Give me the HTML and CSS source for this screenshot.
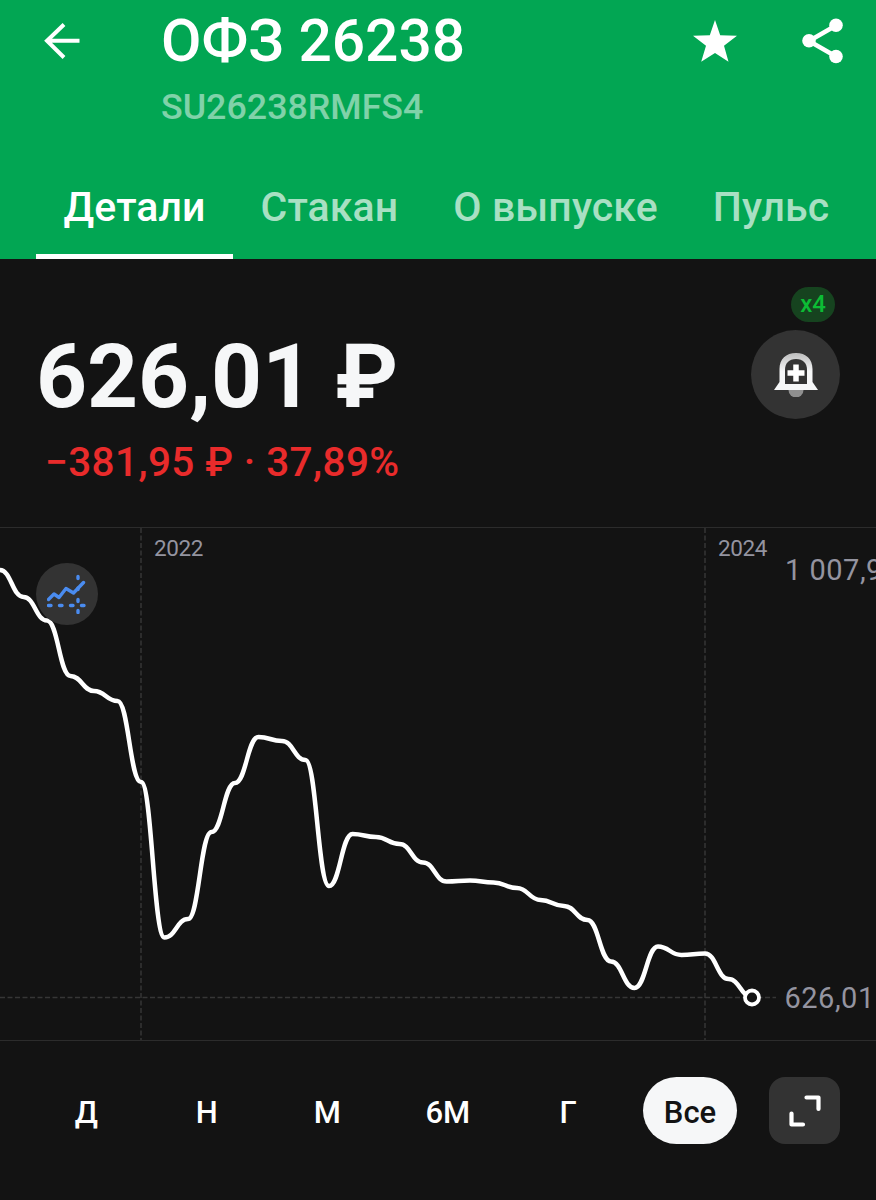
FILE: index.html
```
<!DOCTYPE html>
<html lang="ru">
<head>
    <meta charset="UTF-8">
    <meta name="viewport" content="width=device-width, initial-scale=1.0">
    <title>ОФЗ 26238</title>
    <link rel="stylesheet" href="styles.css">
</head>
<body>

<header class="header">
    <div class="topbar">
        <svg class="back" width="36" height="36" viewBox="0 0 36 36">
            <path d="M35.500 17.800H3M20 1.500L3 17.800L20 34.500" fill="none" stroke="#fff" stroke-width="4"/>
        </svg>
        <div class="heading">
            <h1>ОФЗ 26238</h1>
            <p>SU26238RMFS4</p>
        </div>
        <svg class="star" width="44" height="42" viewBox="0 0 44 42">
            <path d="M22 0L27.200 15.200L44 15.700L31 25.800L35.500 41.700L22 33L8.200 41.700L13 25.800L0 15.700L16.800 15.200Z" fill="#fff"/>
        </svg>
        <svg class="share" width="42" height="46" viewBox="0 0 42 46">
            <path d="M34 7.500L7 23L34 38.500" fill="none" stroke="#fff" stroke-width="4.500"/>
            <circle cx="34" cy="7.200" r="6.800" fill="#fff"/>
            <circle cx="7" cy="22.800" r="6.800" fill="#fff"/>
            <circle cx="34" cy="38.500" r="6.800" fill="#fff"/>
        </svg>
    </div>
    <nav class="tabs">
        <a class="tab active">Детали</a>
        <a class="tab">Стакан</a>
        <a class="tab">О выпуске</a>
        <a class="tab">Пульс</a>
    </nav>
</header>

<section class="quote">
    <div class="quote-text">
        <div class="price">626,01 ₽</div>
        <div class="change">−381,95 ₽ · 37,89%</div>
    </div>
    <div class="alert">
        <span class="badge">x4</span>
        <div class="alert-button">
            <svg width="44" height="44" viewBox="0 0 44 44">
                <defs>
                    <linearGradient id="bell" x1="0" y1="0" x2="0" y2="1">
                        <stop offset="0" stop-color="#bdbdbd"/>
                        <stop offset="0.500" stop-color="#f6f7f8"/>
                    </linearGradient>
                </defs>
                <path d="M14.500 37a7.500 7.500 0 0 0 15 0z" fill="#8f8f8f"/>
                <path d="M0 37L5.500 29V16C5.500 6 12 0 22 0S38.500 6 38.500 16V29L44 37Z" fill="url(#bell)"/>
                <path d="M11 31V17C11 10 15 6 22 6S33 10 33 17V31Z" fill="#333"/>
                <path d="M22 11.500V28.500M13.500 20H30.500" stroke="#fff" stroke-width="5.500"/>
            </svg>
        </div>
    </div>
</section>

<section class="chart">
    <svg width="876" height="512" viewBox="0 528 876 512">
        <g class="grid">
            <path d="M141 528V1040"/>
            <path d="M705 528V1040"/>
            <path d="M0 997.500H776"/>
        </g>
        <text class="year" x="154" y="556">2022</text>
        <text class="year" x="718" y="556">2024</text>
        <text class="value" x="785" y="580">1 007,96</text>
        <text class="value" x="784.500" y="1008">626,01</text>
        <path class="line" id="line"/>
        <circle class="dot" cx="752" cy="997.500" r="7"/>
    </svg>
    <div class="indicators">
        <svg width="40" height="40" viewBox="0 0 40 40">
            <path d="M1.500 25.500L7 20L12 23.500L19 14.500L26.500 19L36.500 8.500"/>
            <path d="M1.500 31.500H4M12.500 31.500H15M23.500 31.500H26M34.500 31.500H37"/>
            <path d="M31 2.500V4.500M31 14V15.500M31 25.500V27.500M31 36.500V38.500"/>
        </svg>
    </div>
</section>

<footer class="periods">
    <a class="period">Д</a>
    <a class="period">Н</a>
    <a class="period">М</a>
    <a class="period">6М</a>
    <a class="period">Г</a>
    <a class="period selected">Все</a>
    <a class="expand">
        <svg width="32" height="32" viewBox="0 0 32 32">
            <path d="M17.500 2.500H29.500V14M2.500 18.500V29.500H14" fill="none" stroke="#fff" stroke-width="4.200" stroke-linecap="round" stroke-linejoin="round"/>
        </svg>
    </a>
</footer>

<script>
    // One point per month, y is in chart coordinates
    const step = 23.5;
    const points = [
        570, 597, 620.5, 676, 691, 701, 782, 937.5, 919, 832, 783,
        737, 741, 760, 886, 834, 837, 844, 862.5, 881.5, 880.5, 882.5,
        888, 900, 906, 920, 961.5, 988, 946.5, 955, 953.5, 979, 997
    ];
    const bend = 11;

    let d = 'M0 ' + points[0];
    for (let i = 1; i < points.length; i++) {
        const x = i * step;
        d += ` C${x - step + bend} ${points[i - 1]} ${x - bend} ${points[i]} ${x} ${points[i]}`;
    }
    document.getElementById('line').setAttribute('d', d);
</script>

</body>
</html>
```
FILE: styles.css
```
* {
    box-sizing: border-box;
}
body {
    margin: 0;
    height: 1200px;
    overflow: hidden;
    background-color: #131313;
    color: #f6f7f8;
    font-family: Roboto, sans-serif;
    font-weight: 500;
}
.header {
    height: 259px;
    background-color: #02a653;
    color: #fff;
    display: flex;
    flex-direction: column;
    justify-content: space-between;
}
.topbar {
    display: flex;
    align-items: flex-start;
    padding: 0 32px 0 44px;
}
.back {
    margin-top: 23px;
}
.heading {
    flex: 1;
    padding: 6px 0 0 81px;
}
.heading h1 {
    margin: 0;
    font-size: 58.7px;
    line-height: 70px;
    font-weight: 500;
}
.heading p {
    margin: 10px 0 0;
    font-size: 35.8px;
    line-height: 42px;
    color: rgba(255, 255, 255, 0.5);
}
.star {
    margin: 20px 65px 0 0;
}
.share {
    margin-top: 18px;
}
.tabs {
    display: flex;
    padding-left: 36px;
}
.tab {
    height: 84px;
    padding: 8px 27.5px 0;
    font-size: 41px;
    line-height: 48px;
    letter-spacing: 0.1px;
    white-space: nowrap;
    color: rgba(255, 255, 255, 0.66);
}
.tab.active {
    color: #fff;
    border-bottom: 5px solid #fff;
}
.quote {
    height: 268px;
    padding: 28px 36px 0 36px;
    display: flex;
    justify-content: space-between;
}
.price {
    margin-top: 38px;
    font-size: 89px;
    line-height: 104px;
    font-weight: 700;
}
.change {
    margin: 9px 0 0 9px;
    font-size: 40.5px;
    line-height: 48px;
    letter-spacing: 0.4px;
    color: #e92b2b;
}
.alert {
    display: flex;
    flex-direction: column;
    align-items: flex-end;
}
.badge {
    width: 44px;
    height: 35px;
    margin-right: 5px;
    border-radius: 18px;
    background-color: #16431f;
    color: #0cbc35;
    font-size: 24px;
    line-height: 35px;
    text-align: center;
}
.alert-button {
    width: 89px;
    height: 89px;
    margin-top: 8px;
    border-radius: 50%;
    background-color: #333;
    display: flex;
    align-items: center;
    justify-content: center;
}
.chart {
    position: relative;
    height: 514px;
    border-top: 1px solid #2c2c2c;
    border-bottom: 1px solid #2c2c2c;
}
.chart svg {
    display: block;
}
.grid path {
    stroke: #363636;
    stroke-width: 1.5;
    stroke-dasharray: 5 2.5;
}
.year {
    font-size: 22.5px;
    font-weight: 400;
    letter-spacing: -0.4px;
    fill: #9494a0;
}
.value {
    font-size: 29px;
    font-weight: 400;
    letter-spacing: 0.5px;
    fill: #9494a0;
}
.line {
    fill: none;
    stroke: #fff;
    stroke-width: 4.5;
    stroke-linejoin: round;
}
.dot {
    fill: #131313;
    stroke: #fff;
    stroke-width: 3.8;
}
.indicators {
    position: absolute;
    left: 36px;
    top: 35px;
    width: 62px;
    height: 62px;
    border-radius: 50%;
    background-color: #333;
    display: flex;
    align-items: center;
    justify-content: center;
}
.indicators path {
    fill: none;
    stroke: #4a8cf0;
    stroke-width: 3.4;
    stroke-linecap: round;
    stroke-linejoin: round;
}
.periods {
    display: flex;
    align-items: flex-start;
    padding: 36px 36px 0 26px;
}
.period {
    width: 120.5px;
    padding-top: 2px;
    font-size: 31px;
    line-height: 68px;
    text-align: center;
    color: #fff;
}
.period.selected {
    width: 94px;
    height: 67px;
    margin-left: 14.5px;
    border-radius: 34px;
    background-color: #f6f7f8;
    color: #131313;
}
.expand {
    width: 71px;
    height: 67px;
    margin-left: auto;
    border-radius: 16px;
    background-color: #333;
    display: flex;
    align-items: center;
    justify-content: center;
}
```
